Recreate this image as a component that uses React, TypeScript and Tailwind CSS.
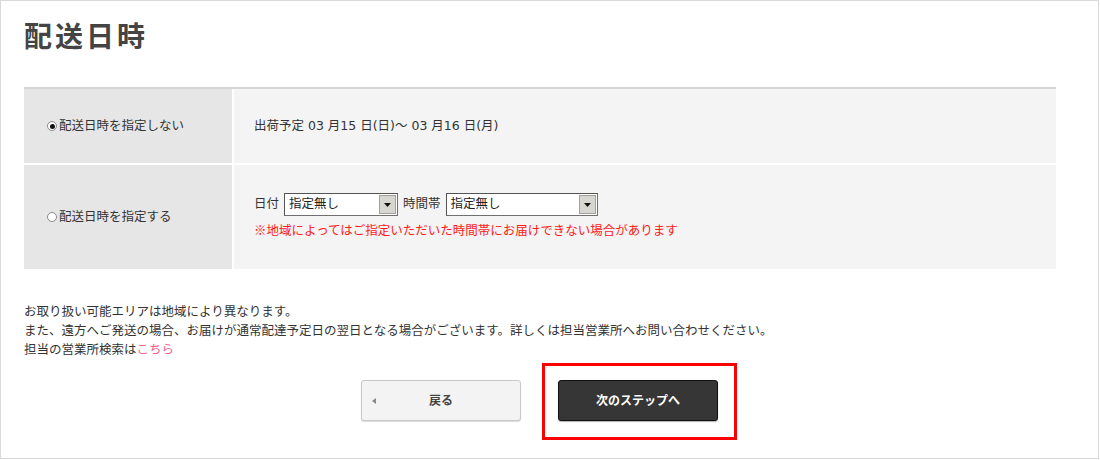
import React from 'react'

const font = { fontFamily: '"Liberation Sans", "Noto Sans CJK JP", sans-serif' }
const digitFont = { fontFamily: '"DejaVu Sans", "Noto Sans CJK JP", sans-serif' }

function Select({ width }: { width: string }) {
  return (
    <div className={`flex h-[23px] items-stretch border border-[#707070] border-t-[#555] border-l-[#555] bg-white ${width}`}>
      <span className="flex-1 pl-[4px] text-[12.5px] leading-[21px] text-[#222]">指定無し</span>
      <span className="m-[1px] flex w-[17px] items-center justify-center border border-[#a0a0a0] bg-[#d8d6d0]">
        <svg width="7" height="4" viewBox="0 0 7 4">
          <path d="M0 0h7L3.5 4z" fill="#111" />
        </svg>
      </span>
    </div>
  )
}

function Radio({ checked }: { checked?: boolean }) {
  return (
    <span className="mr-[2px] inline-flex h-[10px] w-[10px] items-center justify-center rounded-full border border-[#8a8a8a] bg-white">
      {checked && <span className="h-[5px] w-[5px] rounded-full bg-[#111]" />}
    </span>
  )
}

export default function App() {
  return (
    <div style={font} className="h-[460px] w-[1100px] bg-white">
      <div className="h-[459px] w-[1099px] border border-[#d9d9d9] pr-[42px] pl-[23px] pt-[19px]">
        <h1 className="text-[28px] font-bold leading-[36px] tracking-[3px] text-[#444]">配送日時</h1>

        <div className="mt-[31px] border-t-[2px] border-[#d6d6d6] text-[12.5px] text-[#333]">
          <div className="flex h-[76px] border-b-[2px] border-white">
            <div className="flex w-[208px] items-center bg-[#e6e6e6] pl-[23px]">
              <Radio checked />
              配送日時を指定しない
            </div>
            <div style={digitFont} className="flex flex-1 items-center border-l-[2px] border-white bg-[#f4f4f4] pl-[20px] text-[12.5px]">
              出荷予定 03 月15 日(日)～ 03 月16 日(月)
            </div>
          </div>
          <div className="flex h-[104px]">
            <div className="flex w-[208px] items-center bg-[#e6e6e6] pl-[23px]">
              <Radio />
              配送日時を指定する
            </div>
            <div className="flex flex-1 flex-col justify-center border-l-[2px] border-white bg-[#f4f4f4] pl-[20px]">
              <div className="flex items-center gap-[5px]">
                <span>日付</span>
                <Select width="w-[114px]" />
                <span>時間帯</span>
                <Select width="w-[152px]" />
              </div>
              <p className="mt-[6px] text-[12.5px] text-[#ff1a1a]">
                ※地域によってはご指定いただいた時間帯にお届けできない場合があります
              </p>
            </div>
          </div>
        </div>

        <div className="mt-[34px] text-[12.5px] leading-[19px] text-[#333]">
          <p>お取り扱い可能エリアは地域により異なります。</p>
          <p>また、遠方へご発送の場合、お届けが通常配達予定日の翌日となる場合がございます。詳しくは担当営業所へお問い合わせください。</p>
          <p>
            担当の営業所検索は<span className="text-[#f0608c]">こちら</span>
          </p>
        </div>

        <div className="mt-[3px] flex gap-[21px] pl-[337px]">
          <div className="mt-[17px] flex h-[41px] w-[160px] items-center rounded-[3px] border border-[#c8c8c8] bg-[#f3f3f3] shadow-[0_1px_1px_rgba(0,0,0,0.15)]">
            <svg className="ml-[10px]" width="4" height="6" viewBox="0 0 4 6">
              <path d="M4 0v6L0 3z" fill="#888" />
            </svg>
            <span className="flex-1 pr-[14px] text-center text-[12px] font-bold text-[#444]">戻る</span>
          </div>
          <div className="border-[3px] border-[#ff0000] pl-[13px] pr-[16px] pt-[14px] pb-[16px]">
            <div className="flex h-[41px] w-[160px] items-center justify-center rounded-[3px] border border-[#111] bg-[#363636] text-[12px] font-bold text-white shadow-[0_1px_1px_rgba(0,0,0,0.3)]">
              次のステップへ
            </div>
          </div>
        </div>
      </div>
    </div>
  )
}
